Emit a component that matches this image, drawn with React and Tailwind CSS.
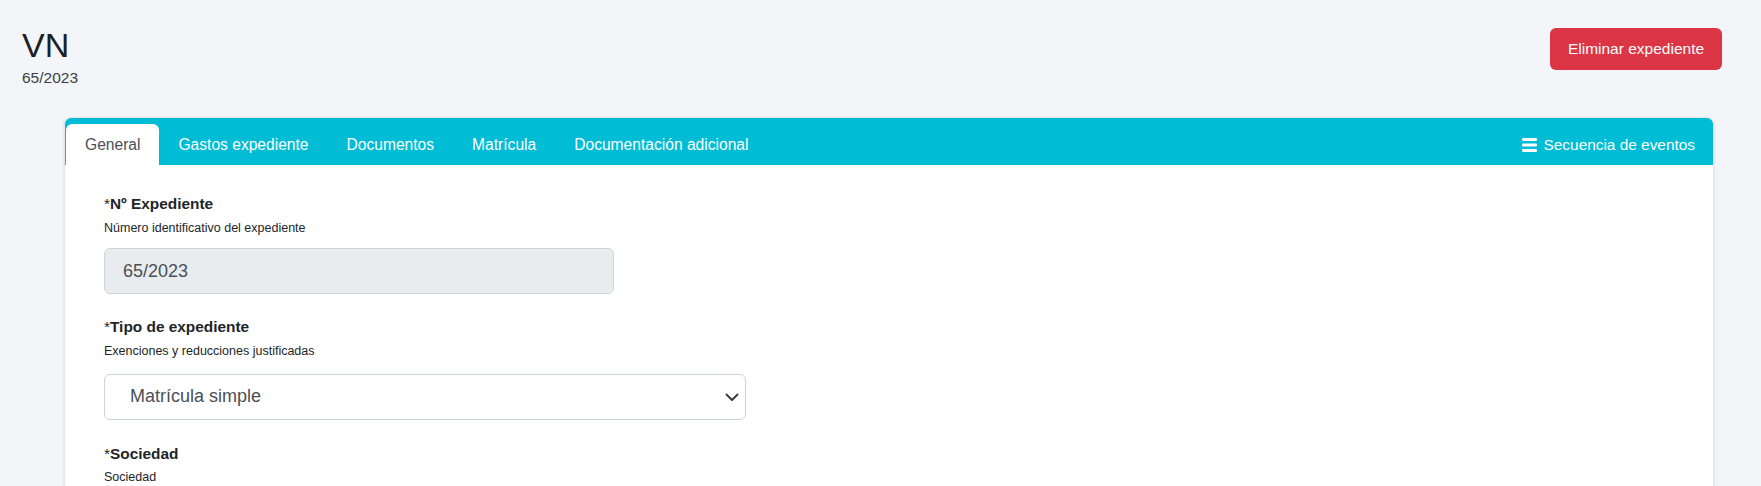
import React from "react";

function BarsIcon() {
  return (
    <svg width="15" height="14" viewBox="0 0 15 14" className="block">
      <rect x="0" y="0" width="15" height="3" rx="1.2" fill="#ffffff" />
      <rect x="0" y="5.5" width="15" height="3" rx="1.2" fill="#ffffff" />
      <rect x="0" y="11" width="15" height="3" rx="1.2" fill="#ffffff" />
    </svg>
  );
}

function Chevron() {
  return (
    <svg width="16" height="16" viewBox="0 0 16 16" className="block">
      <path d="m2.5 5.5 5.5 5.5 5.5-5.5" fill="none" stroke="#343a40" strokeWidth="1.9" strokeLinecap="round" strokeLinejoin="round" />
    </svg>
  );
}

function Label({ children }) {
  return (
    <div className="text-[15.4px] leading-[22.5px] text-[#212529]">
      <span className="font-normal">*</span>
      <span className="font-bold">{children}</span>
    </div>
  );
}

function Help({ children }) {
  return <div className="mt-[3px] text-[12.5px] leading-[18.75px] text-[#212529]">{children}</div>;
}

export default function App() {
  const tabs = ["Gastos expediente", "Documentos", "Matrícula", "Documentación adicional"];
  return (
    <div className="min-h-screen bg-[#f4f5f9] font-['Liberation_Sans',Arial,sans-serif] pb-10">
      <div className="flex items-start justify-between pl-[22px] pr-[39px] pt-[24px]">
        <div>
          <h1 className="text-[34px] leading-[42px] text-[#1c1f24] font-normal">VN</h1>
          <div className="text-[15.5px] leading-[23px] text-[#3a3f45]">65/2023</div>
        </div>
        <button className="mt-[4px] flex h-[42px] w-[172px] items-center justify-center rounded-[6px] bg-[#dc3545] text-[15.5px] text-white">
          Eliminar expediente
        </button>
      </div>

      <div className="ml-[64px] mr-[47px] mt-[28px] rounded-[6px] border border-[#e3e6ea] bg-white shadow-sm">
        <div className="flex h-[47px] items-end rounded-t-[6px] bg-[#00bcd4] pl-[1px]">
          <div className="flex h-[41px] items-center rounded-t-[6px] bg-white px-[19px] text-[15.6px] text-[#495057]">
            General
          </div>
          {tabs.map((t) => (
            <div key={t} className="flex h-[41px] items-center px-[19px] text-[15.6px] text-white">
              {t}
            </div>
          ))}
          <div className="ml-auto flex h-[41px] items-center gap-[7px] pr-[18px] text-[15.4px] text-white">
            <BarsIcon />
            <span>Secuencia de eventos</span>
          </div>
        </div>

        <div className="px-[39px] pt-[28px] pb-10">
          <div>
            <Label>Nº Expediente</Label>
            <Help>Número identificativo del expediente</Help>
            <div className="mt-[11px] flex h-[46px] w-[510px] items-center rounded-[6px] border border-[#ced4da] bg-[#e9ecef] pl-[18px] text-[18px] text-[#495057]">
              65/2023
            </div>
          </div>

          <div className="mt-[22px]">
            <Label>Tipo de expediente</Label>
            <Help>Exenciones y reducciones justificadas</Help>
            <div className="mt-[13px] flex h-[46px] w-[642px] items-center justify-between rounded-[6px] border border-[#ced4da] bg-white pl-[25px] pr-[5px] text-[18px] text-[#495057]">
              <span>Matrícula simple</span>
              <Chevron />
            </div>
          </div>

          <div className="mt-[23px]">
            <Label>Sociedad</Label>
            <Help>Sociedad</Help>
            <div className="mt-[13px] flex h-[46px] w-[642px] items-center justify-between rounded-[6px] border border-[#ced4da] bg-white pl-[25px] pr-[5px] text-[18px] text-[#495057]">
              <span>Seleccione una sociedad</span>
              <Chevron />
            </div>
          </div>
        </div>
      </div>
    </div>
  );
}
